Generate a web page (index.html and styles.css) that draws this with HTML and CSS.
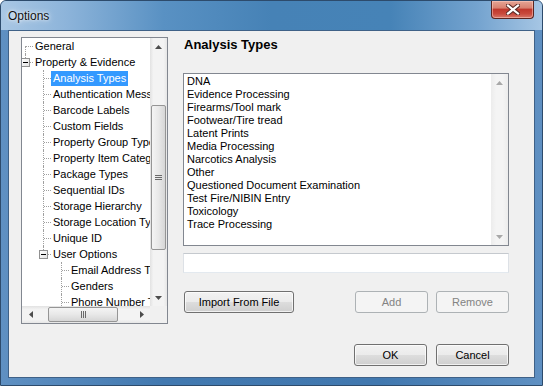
FILE: index.html
```html
<!DOCTYPE html>
<html lang="en">
<head>
    <meta charset="UTF-8">
    <title>Options</title>
    <link rel="stylesheet" href="styles.css">
</head>
<body>
    <div class="window">
        <div class="titlebar">
            <span class="title">Options</span>
            <div class="close">
                <svg width="14" height="11" viewBox="0 0 14 11">
                    <path d="M2 1.5 L12 9.5 M12 1.5 L2 9.5" stroke="#5a2a25" stroke-width="4.2" stroke-linecap="square"/>
                    <path d="M2 1.5 L12 9.5 M12 1.5 L2 9.5" stroke="#ffffff" stroke-width="2.2" stroke-linecap="square"/>
                </svg>
            </div>
        </div>

        <div class="client">
            <div class="content">
                <div class="tree">
                    <div class="tree-view">
                        <div class="tree-items">
                            <div class="row"><span class="g f"></span><span class="label">General</span></div>
                            <div class="row"><span class="g l"><span class="box"></span></span><span class="label">Property &amp; Evidence</span></div>
                            <div class="row"><span class="g"></span><span class="g t"></span><span class="label selected">Analysis Types</span></div>
                            <div class="row"><span class="g"></span><span class="g t"></span><span class="label">Authentication Messages</span></div>
                            <div class="row"><span class="g"></span><span class="g t"></span><span class="label">Barcode Labels</span></div>
                            <div class="row"><span class="g"></span><span class="g t"></span><span class="label">Custom Fields</span></div>
                            <div class="row"><span class="g"></span><span class="g t"></span><span class="label">Property Group Types</span></div>
                            <div class="row"><span class="g"></span><span class="g t"></span><span class="label">Property Item Categories</span></div>
                            <div class="row"><span class="g"></span><span class="g t"></span><span class="label">Package Types</span></div>
                            <div class="row"><span class="g"></span><span class="g t"></span><span class="label">Sequential IDs</span></div>
                            <div class="row"><span class="g"></span><span class="g t"></span><span class="label">Storage Hierarchy</span></div>
                            <div class="row"><span class="g"></span><span class="g t"></span><span class="label">Storage Location Types</span></div>
                            <div class="row"><span class="g"></span><span class="g t"></span><span class="label">Unique ID</span></div>
                            <div class="row"><span class="g"></span><span class="g l"><span class="box"></span></span><span class="label">User Options</span></div>
                            <div class="row"><span class="g"></span><span class="g"></span><span class="g t"></span><span class="label">Email Address Types</span></div>
                            <div class="row"><span class="g"></span><span class="g"></span><span class="g t"></span><span class="label">Genders</span></div>
                            <div class="row"><span class="g"></span><span class="g"></span><span class="g t"></span><span class="label">Phone Number Types</span></div>
                        </div>
                    </div>
                    <div class="vscroll">
                        <div class="arrow"><svg width="7" height="4"><path d="M0 4 L3.5 0 L7 4 Z" fill="#4d4d4d"/></svg></div>
                        <div class="vtrack"><div class="vthumb"><span class="grip-v"></span></div></div>
                        <div class="arrow"><svg width="7" height="4"><path d="M0 0 L3.5 4 L7 0 Z" fill="#4d4d4d"/></svg></div>
                    </div>
                    <div class="hscroll">
                        <div class="arrow"><svg width="4" height="7"><path d="M4 0 L0 3.5 L4 7 Z" fill="#4d4d4d"/></svg></div>
                        <div class="htrack"><div class="hthumb"><span class="grip-h"></span></div></div>
                        <div class="arrow"><svg width="4" height="7"><path d="M0 0 L4 3.5 L0 7 Z" fill="#4d4d4d"/></svg></div>
                    </div>
                    <div class="corner"></div>
                </div>

                <div class="panel">
                    <h2 class="heading">Analysis Types</h2>
                    <div class="listbox">
                        <ul class="items">
                            <li>DNA</li>
                            <li>Evidence Processing</li>
                            <li>Firearms/Tool mark</li>
                            <li>Footwear/Tire tread</li>
                            <li>Latent Prints</li>
                            <li>Media Processing</li>
                            <li>Narcotics Analysis</li>
                            <li>Other</li>
                            <li>Questioned Document Examination</li>
                            <li>Test Fire/NIBIN Entry</li>
                            <li>Toxicology</li>
                            <li>Trace Processing</li>
                        </ul>
                        <div class="list-scroll">
                            <div class="arrow"><svg width="7" height="4"><path d="M0 4 L3.5 0 L7 4 Z" fill="#a8a8a8"/></svg></div>
                            <div class="arrow"><svg width="7" height="4"><path d="M0 0 L3.5 4 L7 0 Z" fill="#a8a8a8"/></svg></div>
                        </div>
                    </div>
                    <input type="text" class="textbox">
                    <div class="btn-row">
                        <button class="btn btn-import">Import From File</button>
                        <div class="btn-group">
                            <button class="btn btn-small" disabled>Add</button>
                            <button class="btn btn-small" disabled>Remove</button>
                        </div>
                    </div>
                </div>
            </div>

            <div class="footer">
                <button class="btn btn-small">OK</button>
                <button class="btn btn-small">Cancel</button>
            </div>
        </div>
    </div>
</body>
</html>
```

FILE: styles.css
```css
body {
    margin: 0;
    padding: 0;
    font-family: 'Liberation Sans', Arial, sans-serif;
    font-size: 11px;
    color: #000;
    background: #ffffff;
}
.window {
    width: 543px;
    height: 386px;
    box-sizing: border-box;
    border: 1px solid #2d4b6c;
    border-radius: 6px 6px 0 0;
    padding: 0 7px 7px 7px;
    background: linear-gradient(90deg, #5f90c2, #4279b0 30%, #4178af 70%, #5f90c2);
    display: flex;
    flex-direction: column;
}
.titlebar {
    height: 29px;
    margin: 0 -7px;
    padding: 0 8px 0 7px;
    border-radius: 5px 5px 0 0;
    background: linear-gradient(90deg, #a9c7e4 0%, #8db4da 12%, #5991c3 30%, #4682b6 50%, #4683b7 72%, #74a3cf 88%, #a6c6e4 100%);
    display: flex;
    justify-content: space-between;
    align-items: flex-start;
}
.title {
    font-size: 12px;
    color: #111;
    margin-top: 8px;
    text-shadow: 0 0 6px rgba(255, 255, 255, 0.9), 0 0 3px rgba(255, 255, 255, 0.8);
}
.close {
    width: 43px;
    height: 18px;
    box-sizing: border-box;
    border: 1px solid #5b2520;
    border-top: none;
    border-radius: 0 0 4px 4px;
    background: linear-gradient(180deg, #e5a595 0%, #d98271 40%, #c0392d 50%, #c9493c 75%, #d7786a 100%);
    box-shadow: inset 0 0 0 1px rgba(255, 210, 200, 0.5);
    display: flex;
    align-items: center;
    justify-content: center;
}
.client {
    flex: 1;
    background-color: #f0f0f0;
    border: 1px solid #3f6187;
    padding: 6px 25px 0 12px;
    display: flex;
    flex-direction: column;
}
.content {
    display: flex;
    gap: 15px;
}

/* tree view */
.tree {
    width: 147px;
    height: 287px;
    box-sizing: border-box;
    border: 1px solid #828790;
    background: #fff;
    display: grid;
    grid-template-columns: 1fr 17px;
    grid-template-rows: 1fr 17px;
    flex: none;
}
.tree-view {
    overflow: hidden;
    min-width: 0;
    min-height: 0;
}
.tree-items {
    margin-left: -6px;
    white-space: nowrap;
}
.row {
    height: 16px;
    display: flex;
    align-items: center;
}
.g {
    width: 18px;
    height: 16px;
    flex: none;
    position: relative;
}
.g.t::before, .g.l::before, .g.f::before {
    content: '';
    position: absolute;
    left: 9px;
    top: 0;
    bottom: 0;
    border-left: 1px dotted #a0a0a0;
}
.g.l::before {
    bottom: 8px;
}
.g.f::before {
    top: 8px;
}
.g.t::after, .g.l::after, .g.f::after {
    content: '';
    position: absolute;
    left: 10px;
    top: 8px;
    width: 7px;
    border-top: 1px dotted #a0a0a0;
}
.box {
    position: absolute;
    left: 5px;
    top: 4px;
    width: 7px;
    height: 7px;
    border: 1px solid #919191;
    background: linear-gradient(135deg, #ffffff, #e2e2e2);
    z-index: 1;
}
.box::after {
    content: '';
    position: absolute;
    left: 1px;
    top: 3px;
    width: 5px;
    border-top: 1px solid #000;
}
.label {
    padding: 0 2px;
    margin-left: -1px;
    line-height: 15px;
    height: 15px;
}
.label.selected {
    background-color: #3399ff;
    color: #fff;
}

/* scrollbars */
.vscroll {
    display: flex;
    flex-direction: column;
    background: linear-gradient(90deg, #e2e2e2, #f3f3f3 20%, #f3f3f3 80%, #e6e6e6);
}
.hscroll {
    display: flex;
    background: linear-gradient(180deg, #e2e2e2, #f3f3f3 20%, #f3f3f3 80%, #e6e6e6);
}
.corner {
    background-color: #f0f0f0;
}
.arrow {
    width: 17px;
    height: 17px;
    flex: none;
    display: flex;
    align-items: center;
    justify-content: center;
}
.vtrack {
    flex: 1;
    padding: 0 1px;
}
.vthumb {
    margin-top: 50px;
    height: 145px;
    box-sizing: border-box;
    border: 1px solid #959595;
    border-radius: 2px;
    background: linear-gradient(90deg, #f4f4f4, #e8e8e8 50%, #d6d6d6);
    display: flex;
    align-items: center;
    justify-content: center;
}
.grip-v {
    width: 7px;
    height: 5px;
    background: repeating-linear-gradient(180deg, #6a6a6a 0 1px, transparent 1px 2px);
}
.htrack {
    flex: 1;
    padding: 1px 0;
}
.hthumb {
    margin-left: 9px;
    width: 70px;
    height: 100%;
    box-sizing: border-box;
    border: 1px solid #959595;
    border-radius: 2px;
    background: linear-gradient(180deg, #f4f4f4, #e8e8e8 50%, #d6d6d6);
    display: flex;
    align-items: center;
    justify-content: center;
}
.grip-h {
    width: 5px;
    height: 7px;
    background: repeating-linear-gradient(90deg, #6a6a6a 0 1px, transparent 1px 2px);
}

/* right panel */
.panel {
    width: 326px;
    display: flex;
    flex-direction: column;
}
.heading {
    margin: 0 0 20px 1px;
    font-size: 13px;
    line-height: 16px;
    font-weight: bold;
}
.listbox {
    height: 173px;
    box-sizing: border-box;
    border: 1px solid #828790;
    background: #fff;
    display: flex;
}
.items {
    flex: 1;
    list-style: none;
    margin: 0;
    padding: 1px 0 0 3px;
}
.items li {
    height: 13px;
    line-height: 13px;
}
.list-scroll {
    width: 17px;
    display: flex;
    flex-direction: column;
    justify-content: space-between;
    background: linear-gradient(90deg, #ececec, #f4f4f4 30%, #f4f4f4 70%, #ececec);
}
.textbox {
    margin: 7px 0 0 0;
    height: 20px;
    box-sizing: border-box;
    border: 1px solid;
    border-color: #c5c9ce #dde1e6 #e3e9ef #dde1e6;
    background: #fff;
    padding: 0 3px;
    font-family: inherit;
    font-size: 11px;
}
.btn-row {
    margin-top: 18px;
    display: flex;
    justify-content: space-between;
}
.btn-group {
    display: flex;
    gap: 8px;
}
.btn {
    height: 22px;
    box-sizing: border-box;
    border: 1px solid #707070;
    border-radius: 3px;
    background: linear-gradient(180deg, #f2f2f2 0%, #ebebeb 50%, #dddddd 51%, #cfcfcf 100%);
    box-shadow: inset 0 0 0 1px rgba(255, 255, 255, 0.7);
    font-family: 'Liberation Sans', Arial, sans-serif;
    font-size: 11px;
    color: #000;
    padding: 0;
}
.btn-import {
    width: 110px;
    margin-left: 1px;
}
.btn-small {
    width: 73px;
}
.btn:disabled {
    border-color: #adb2b5;
    background: #f4f4f4;
    box-shadow: none;
    color: #838383;
}
.footer {
    margin-top: 20px;
    display: flex;
    justify-content: flex-end;
    gap: 9px;
}
```
